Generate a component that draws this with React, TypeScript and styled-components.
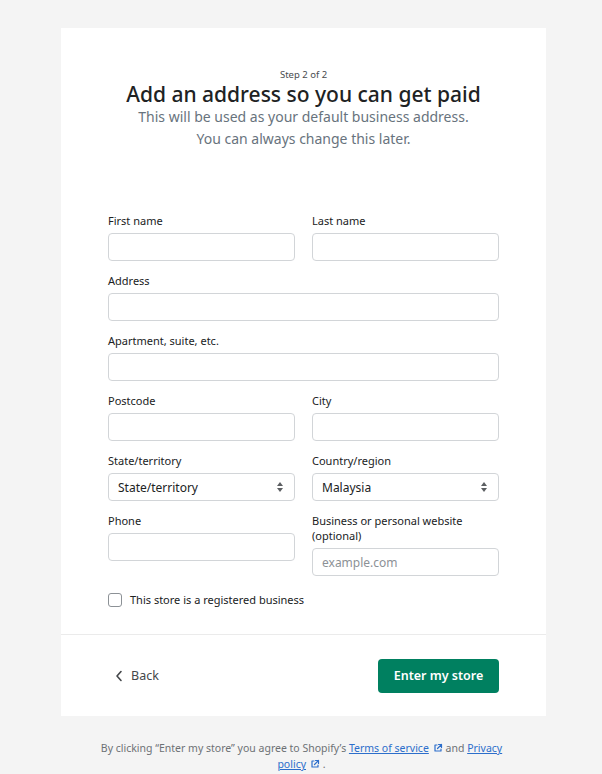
import React from "react";
import styled, { createGlobalStyle } from "styled-components";

const GlobalStyle = createGlobalStyle`
  html, body {
    margin: 0;
    padding: 0;
    background: #f4f4f4;
  }
  body {
    font-family: "Noto Sans", "Open Sans", sans-serif;
    color: #202223;
  }
`;

const Page = styled.div`
  box-sizing: border-box;
  width: 602px;
  min-height: 774px;
  padding: 28px 56px 0 61px;
`;

const Card = styled.div`
  background: #ffffff;
  width: 485px;
`;

const Body = styled.div`
  padding: 40px 47px 26px;
`;

const Header = styled.div`
  display: flex;
  flex-direction: column;
  align-items: center;
  text-align: center;
  margin-bottom: 63px;
`;

const Step = styled.div`
  font-size: 9.5px;
  line-height: 14px;
  color: #4a4d50;
`;

const Title = styled.h1`
  margin: 0;
  font-size: 21px;
  line-height: 24px;
  font-weight: 500;
  color: #202223;
`;

const Subtitle = styled.p`
  margin: 0;
  font-size: 14px;
  line-height: 22px;
  color: #68737d;
`;

const Form = styled.div`
  display: grid;
  grid-template-columns: 1fr 1fr;
  column-gap: 17px;
  row-gap: 12px;
  align-items: start;
`;

const Field = styled.label<{ $full?: boolean }>`
  display: flex;
  flex-direction: column;
  gap: 5px;
  grid-column: ${(p) => (p.$full ? "1 / -1" : "auto")};
`;

const Label = styled.span`
  font-size: 11px;
  line-height: 15px;
  color: #202223;
`;

const Input = styled.input`
  box-sizing: border-box;
  height: 28px;
  width: 100%;
  border: 1px solid #d2d5d8;
  border-radius: 4px;
  padding: 0 9px;
  font-family: inherit;
  font-size: 12px;
  color: #202223;
  background: #fff;
  outline: none;
  &::placeholder {
    color: #8c9196;
  }
`;

const SelectBox = styled.div`
  box-sizing: border-box;
  height: 28px;
  border: 1px solid #d2d5d8;
  border-radius: 4px;
  padding: 0 10px 0 9px;
  display: flex;
  align-items: center;
  justify-content: space-between;
  font-size: 12px;
  color: #202223;
`;

const CheckRow = styled.label`
  display: flex;
  align-items: center;
  gap: 8px;
  margin-top: 16px;
  font-size: 11px;
  line-height: 16px;
  color: #202223;
`;

const CheckBox = styled.span`
  box-sizing: border-box;
  width: 14px;
  height: 14px;
  border: 1.5px solid #8c9196;
  border-radius: 3px;
`;

const Footer = styled.div`
  border-top: 1px solid #ebebeb;
  height: 82px;
  box-sizing: border-box;
  padding: 0 47px 0 54px;
  display: flex;
  align-items: center;
  justify-content: space-between;
`;

const BackButton = styled.button`
  border: 0;
  background: none;
  padding: 0;
  display: flex;
  align-items: center;
  gap: 8px;
  font-family: inherit;
  font-size: 12.5px;
  color: #44474a;
  cursor: pointer;
`;

const PrimaryButton = styled.button`
  box-sizing: border-box;
  width: 121px;
  height: 34px;
  border: 0;
  border-radius: 4px;
  background: #008060;
  color: #ffffff;
  font-family: inherit;
  font-weight: 600;
  font-size: 12.5px;
  cursor: pointer;
`;

const Legal = styled.p`
  width: 420px;
  margin: 24px auto 0;
  padding-right: 4px;
  text-align: center;
  font-size: 10.5px;
  line-height: 16px;
  color: #6d7175;
`;

const Link = styled.a`
  color: #2c6ecb;
  text-decoration: underline;
  white-space: nowrap;
`;

const ExtIcon = () => (
  <svg width="10" height="10" viewBox="0 0 20 20" style={{ marginLeft: 4, verticalAlign: "-1px" }}>
    <path
      d="M11 3h6v6M17 3l-8 8M8 4H4v12h12v-4"
      fill="none"
      stroke="#2c6ecb"
      strokeWidth="2.4"
      strokeLinecap="round"
      strokeLinejoin="round"
    />
  </svg>
);

const SelectArrows = () => (
  <svg width="8" height="12" viewBox="0 0 8 12">
    <path d="M4 1 L7 5 H1 Z" fill="#5c5f62" />
    <path d="M4 11 L7 7 H1 Z" fill="#5c5f62" />
  </svg>
);

const Chevron = () => (
  <svg width="8" height="12" viewBox="0 0 8 12">
    <path d="M6 1.5 L2 6 L6 10.5" fill="none" stroke="#44474a" strokeWidth="1.6" strokeLinecap="round" strokeLinejoin="round" />
  </svg>
);

const Select: React.FC<{ value: string }> = ({ value }) => (
  <SelectBox>
    <span>{value}</span>
    <SelectArrows />
  </SelectBox>
);

export default function App() {
  return (
    <Page>
      <GlobalStyle />
      <Card>
        <Body>
          <Header>
            <Step>Step 2 of 2</Step>
            <Title>Add an address so you can get paid</Title>
            <Subtitle>This will be used as your default business address.</Subtitle>
            <Subtitle>You can always change this later.</Subtitle>
          </Header>
          <Form>
            <Field>
              <Label>First name</Label>
              <Input />
            </Field>
            <Field>
              <Label>Last name</Label>
              <Input />
            </Field>
            <Field $full>
              <Label>Address</Label>
              <Input />
            </Field>
            <Field $full>
              <Label>Apartment, suite, etc.</Label>
              <Input />
            </Field>
            <Field>
              <Label>Postcode</Label>
              <Input />
            </Field>
            <Field>
              <Label>City</Label>
              <Input />
            </Field>
            <Field>
              <Label>State/territory</Label>
              <Select value="State/territory" />
            </Field>
            <Field>
              <Label>Country/region</Label>
              <Select value="Malaysia" />
            </Field>
            <Field>
              <Label>Phone</Label>
              <Input />
            </Field>
            <Field>
              <Label>
                Business or personal website
                <br />
                (optional)
              </Label>
              <Input placeholder="example.com" />
            </Field>
          </Form>
          <CheckRow>
            <CheckBox />
            This store is a registered business
          </CheckRow>
        </Body>
        <Footer>
          <BackButton>
            <Chevron />
            Back
          </BackButton>
          <PrimaryButton>Enter my store</PrimaryButton>
        </Footer>
      </Card>
      <Legal>
        By clicking “Enter my store” you agree to Shopify’s{" "}
        <Link href="#">
          Terms of service
          <ExtIcon />
        </Link>{" "}
        and <Link href="#">Privacy</Link>
        <br />
        <Link href="#">
          policy
          <ExtIcon />
        </Link>{" "}
        .
      </Legal>
    </Page>
  );
}
